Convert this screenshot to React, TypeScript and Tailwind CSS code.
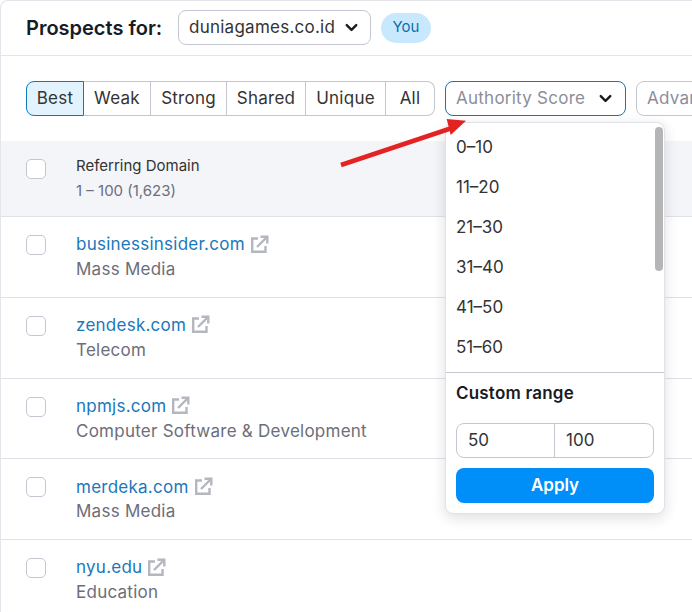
import { ChevronDown } from 'lucide-react';

const tabs = [
  { label: 'Best', width: 'w-[58px]' },
  { label: 'Weak', width: 'w-[67px]' },
  { label: 'Strong', width: 'w-[76px]' },
  { label: 'Shared', width: 'w-[79px]' },
  { label: 'Unique', width: 'w-[80px]' },
  { label: 'All', width: 'w-[49px]' },
];

const rows = [
  { domain: 'businessinsider.com', category: 'Mass Media' },
  { domain: 'zendesk.com', category: 'Telecom' },
  { domain: 'npmjs.com', category: 'Computer Software & Development' },
  { domain: 'merdeka.com', category: 'Mass Media' },
  { domain: 'nyu.edu', category: 'Education' },
];

const ranges = ['0–10', '11–20', '21–30', '31–40', '41–50', '51–60'];

function Checkbox({ className }: { className: string }) {
  return <div className={`w-5 h-5 shrink-0 bg-white border border-[#c4c7cf] rounded-[5px] ${className}`} />;
}

function LinkIcon() {
  return (
    <svg className="ml-[5px] mb-[2px] shrink-0" width="19" height="19" viewBox="0 0 19 19" fill="none" stroke="#b5b7bf" strokeWidth="2.4">
      <path d="M8 3.5H2.2V16.8H15.5V11" />
      <path d="M7 12L16.5 2.5" />
      <path d="M10.5 1.7H17.3V8.5" />
    </svg>
  );
}

function ScoreDropdown() {
  return (
    <div className="absolute left-[445px] top-[122px] w-[220px] h-[392px] bg-white border border-[#e0e1e9] rounded-lg shadow-[0_4px_14px_rgba(25,27,35,0.14)]">
      <div className="absolute right-[1px] top-[4px] w-[8px] h-[144px] rounded bg-[#b5b5b5]" />
      <div className="h-[249px] pt-[5px] pl-[10px]">
        {ranges.map(range => (
          <div key={range} className="h-10 flex items-center text-[17px] text-[#333]">
            {range}
          </div>
        ))}
      </div>
      <div className="border-t border-[#c4c7cf] px-[10px]">
        <div className="mt-[11px] h-5 flex items-center text-[17px] tracking-[0.2px] font-semibold text-[#191b23]">Custom range</div>
        <div className="mt-[19px] h-[35px] w-[198px] flex border border-[#c4c7cf] rounded-lg text-[17px] text-[#333]">
          <div className="w-[98px] pl-[11px] flex items-center border-r border-[#c4c7cf]">50</div>
          <div className="flex-1 pl-[11px] flex items-center">100</div>
        </div>
        <button className="mt-[10px] w-[198px] h-[35px] rounded-lg bg-[#008ff8] text-white text-[17px] font-semibold">
          Apply
        </button>
      </div>
    </div>
  );
}

function Arrow() {
  return (
    <svg className="absolute left-[335px] top-[112px]" width="135" height="58" viewBox="0 0 135 58">
      <line x1="6" y1="53" x2="120" y2="15" stroke="#e32222" strokeWidth="4.5" />
      <polygon points="131,8.7 111.7,7 115.7,23" fill="#e32222" />
    </svg>
  );
}

export default function App() {
  return (
    <div className="relative w-[692px] h-[612px] overflow-hidden bg-white font-['Inter',sans-serif] text-[#191b23]">
      <div className="h-[56px] pl-[26px] flex items-center border-b border-[#e3e5ea]">
        <span className="text-[20px] font-semibold w-[152px] whitespace-nowrap">Prospects for:</span>
        <div className="w-[193px] h-[35px] flex items-center pl-[10px] border border-[#c4c7cf] rounded-lg text-[17px] text-[#333] tracking-[0.25px] whitespace-nowrap">
          duniagames.co.id
          <ChevronDown className="ml-[7px]" size={19} strokeWidth={3} color="#191b23" />
        </div>
        <span className="ml-[10px] w-[50px] h-[30px] flex items-center justify-center rounded-full bg-[#c8e9fd] text-[15px] text-[#0a6fb0]">
          You
        </span>
      </div>

      <div className="h-[85px] pl-[26px] pt-[25px] flex items-start">
        <div className="h-[35px] flex">
          {tabs.map((tab, i) => (
            <div
              key={tab.label}
              className={`${tab.width} flex items-center justify-center text-[17px] tracking-[0.25px] text-[#333] border-y ${
                i === 0
                  ? 'border border-[#0a7ab8] bg-[#e2f3fd] rounded-l-lg'
                  : i === tabs.length - 1
                    ? 'border-r border-[#c4c7cf] rounded-r-lg'
                    : 'border-r border-[#c4c7cf]'
              } ${i === 0 ? '' : 'border-y-[#c4c7cf]'}`}
            >
              {tab.label}
            </div>
          ))}
        </div>
        <div className="ml-[10px] w-[181px] h-[35px] shrink-0 flex items-center pl-[10px] border border-[#0a7ab8] rounded-lg text-[17px] text-[#8b8e99] tracking-[0.25px] whitespace-nowrap">
          Authority Score
          <ChevronDown className="ml-[11px]" size={19} strokeWidth={3} color="#191b23" />
        </div>
        <div className="ml-[10px] w-[120px] h-[35px] shrink-0 flex items-center pl-[10px] border border-[#c4c7cf] rounded-lg text-[17px] text-[#8b8e99] tracking-[0.25px] whitespace-nowrap">
          Advanced
        </div>
      </div>

      <div className="h-[76px] pl-[26px] flex bg-[#f4f5f9] border-b border-[#e0e1e9]">
        <Checkbox className="mt-[18px]" />
        <div className="ml-[30px] pt-[16px]">
          <div className="h-[18px] leading-[18px] text-[15px] text-[#333]">Referring Domain</div>
          <div className="mt-[7px] h-[18px] leading-[18px] text-[15px] text-[#6c6e79]">1 – 100 (1,623)</div>
        </div>
      </div>

      {rows.map(row => (
        <div key={row.domain} className="h-[80.75px] pl-[26px] flex border-b border-[#e0e1e9]">
          <Checkbox className="mt-[18px]" />
          <div className="ml-[30px] pt-[18px]">
            <div className="h-5 flex items-center text-[17px] text-[#1a78bb] tracking-[0.25px]">
              {row.domain}
              <LinkIcon />
            </div>
            <div className="mt-[4px] h-5 leading-5 text-[17px] text-[#6c6e79] tracking-[0.25px]">{row.category}</div>
          </div>
        </div>
      ))}

      <ScoreDropdown />
      <Arrow />
      <div className="absolute inset-0 border-l border-t border-[#e3e5ea] rounded-tl-lg pointer-events-none" />
    </div>
  );
}
